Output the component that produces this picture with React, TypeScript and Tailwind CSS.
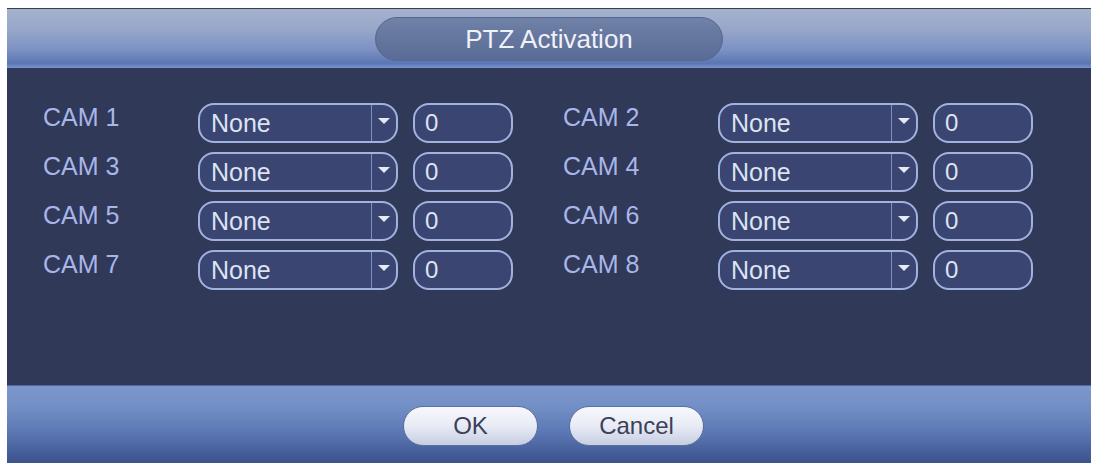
import { FC } from "react";

const cams = ["CAM 1", "CAM 2", "CAM 3", "CAM 4", "CAM 5", "CAM 6", "CAM 7", "CAM 8"];

const SelectBox: FC<{ value: string }> = ({ value }) => (
  <div className="w-[200px] h-[40px] rounded-[16px] border-2 border-[#a2b2df] bg-[#3a4571] flex overflow-hidden">
    <div className="flex-1 pl-[11px] flex items-center text-[25px] leading-none text-[#dde3f3]">{value}</div>
    <div className="w-[25px] border-l border-[#7f8fc2] flex items-center justify-center pb-[4px]">
      <svg width="12" height="6" viewBox="0 0 12 6">
        <path d="M0 0 H12 L6 6 Z" fill="#e6eaf6" />
      </svg>
    </div>
  </div>
);

const NumberBox: FC<{ value: string }> = ({ value }) => (
  <div className="w-[100px] h-[40px] rounded-[16px] border-2 border-[#a2b2df] bg-[#3a4571] flex items-center pl-[10px] text-[24px] leading-none text-[#dde3f3]">
    {value}
  </div>
);

const CamRow: FC<{ label: string }> = ({ label }) => (
  <div className="flex items-start">
    <div className="w-[155px] h-[40px] pt-[2px] text-[25px] leading-none text-[#a8b6ea]">{label}</div>
    <SelectBox value="None" />
    <div className="ml-[15px]">
      <NumberBox value="0" />
    </div>
  </div>
);

const FooterButton: FC<{ label: string }> = ({ label }) => (
  <button className="w-[135px] h-[40px] rounded-full border border-[#5d6f9f] bg-[linear-gradient(180deg,#f7f8fc_0%,#e8ebf5_50%,#c6cee2_100%)] text-[24px] leading-none text-[#3a4158] flex items-center justify-center">
    {label}
  </button>
);

export default function App() {
  return (
    <div className="w-[1095px] h-[465px] bg-white overflow-hidden font-['Liberation_Sans',Arial,sans-serif]">
      <div className="h-[8px]" />

      <div className="ml-[7px] w-[1084px] flex flex-col border-t border-[#3a3f4e]">
        {/* header */}
        <div className="h-[59px] pt-[8px] flex justify-center bg-[linear-gradient(180deg,#a6b2cd_0%,#97a7ca_35%,#7b91c3_70%,#5b76b4_92%,#7a92c8_100%)]">
          <div className="w-[348px] h-[44px] rounded-full border border-[#556690] bg-[linear-gradient(180deg,#7182a8_0%,#64759e_50%,#5a6b95_100%)] flex items-center justify-center text-[26px] leading-none text-[#eef1f8]">
            PTZ Activation
          </div>
        </div>

        {/* body */}
        <div className="h-[317px] bg-[#313959] pt-[35px] pl-[36px]">
          <div className="grid grid-cols-[470px_470px] gap-x-[50px] gap-y-[9px]">
            {cams.map((c) => (
              <CamRow key={c} label={c} />
            ))}
          </div>
        </div>

        {/* footer */}
        <div className="h-[78px] pt-[20px] pl-[9px] flex justify-center gap-[31px] border-t border-[#56679a] bg-[linear-gradient(180deg,#7d97cb_0%,#7390c6_25%,#607cb8_55%,#46609b_85%,#3c528d_100%)]">
          <FooterButton label="OK" />
          <FooterButton label="Cancel" />
        </div>
      </div>
    </div>
  );
}
